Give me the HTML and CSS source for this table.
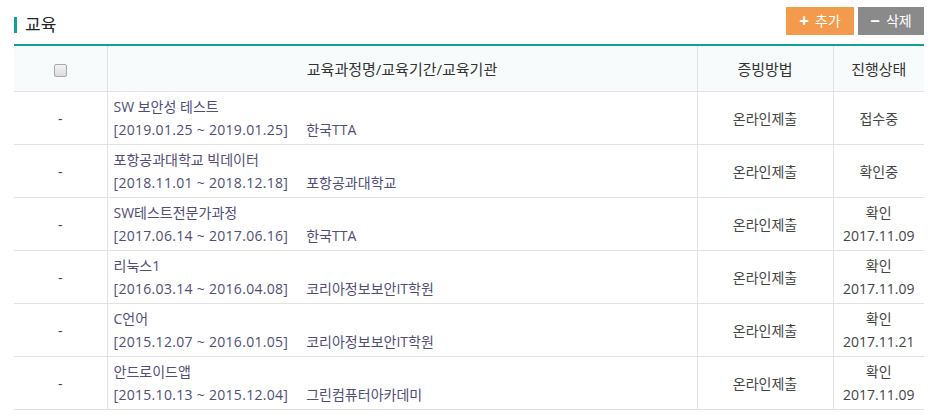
FILE: index.html
```html
<!DOCTYPE html>
<html lang="ko">
<head>
    <meta charset="UTF-8">
    <title>교육</title>
    <link rel="stylesheet" href="styles.css">
</head>
<body>
    <div class="section">
        <div class="section-head">
            <h3 class="section-title">교육</h3>
            <div class="btn-group">
                <button class="btn btn-add"><span class="btn-icon">+</span>추가</button>
                <button class="btn btn-del"><span class="btn-icon">&minus;</span>삭제</button>
            </div>
        </div>

        <table class="edu-table">
            <colgroup>
                <col class="col-check">
                <col class="col-name">
                <col class="col-proof">
                <col class="col-state">
            </colgroup>
            <thead>
                <tr>
                    <th><span class="chk"></span></th>
                    <th>교육과정명/교육기간/교육기관</th>
                    <th>증빙방법</th>
                    <th>진행상태</th>
                </tr>
            </thead>
            <tbody>
                <tr>
                    <td>-</td>
                    <td class="name">SW 보안성 테스트<br><span class="period">[2019.01.25 ~ 2019.01.25]</span><span class="org">한국TTA</span></td>
                    <td>온라인제출</td>
                    <td>접수중</td>
                </tr>
                <tr>
                    <td>-</td>
                    <td class="name">포항공과대학교 빅데이터<br><span class="period">[2018.11.01 ~ 2018.12.18]</span><span class="org">포항공과대학교</span></td>
                    <td>온라인제출</td>
                    <td>확인중</td>
                </tr>
                <tr>
                    <td>-</td>
                    <td class="name">SW테스트전문가과정<br><span class="period">[2017.06.14 ~ 2017.06.16]</span><span class="org">한국TTA</span></td>
                    <td>온라인제출</td>
                    <td>확인<br>2017.11.09</td>
                </tr>
                <tr>
                    <td>-</td>
                    <td class="name">리눅스1<br><span class="period">[2016.03.14 ~ 2016.04.08]</span><span class="org">코리아정보보안IT학원</span></td>
                    <td>온라인제출</td>
                    <td>확인<br>2017.11.09</td>
                </tr>
                <tr>
                    <td>-</td>
                    <td class="name">C언어<br><span class="period">[2015.12.07 ~ 2016.01.05]</span><span class="org">코리아정보보안IT학원</span></td>
                    <td>온라인제출</td>
                    <td>확인<br>2017.11.21</td>
                </tr>
                <tr>
                    <td>-</td>
                    <td class="name">안드로이드앱<br><span class="period">[2015.10.13 ~ 2015.12.04]</span><span class="org">그린컴퓨터아카데미</span></td>
                    <td>온라인제출</td>
                    <td>확인<br>2017.11.09</td>
                </tr>
            </tbody>
        </table>
    </div>
</body>
</html>
```

FILE: styles.css
```css
body {
    margin: 0;
    font-family: "Open Sans", "Noto Sans CJK KR", sans-serif;
    color: #333;
    background: #fff;
}
.section {
    width: 910px;
    padding: 7px 16px 0 14px;
}
.section-head {
    display: flex;
    justify-content: space-between;
    align-items: flex-start;
    height: 37px;
}
.section-title {
    margin: 10px 0 0;
    padding-left: 8px;
    border-left: 3px solid #13a09c;
    font-size: 17px;
    font-weight: normal;
    line-height: 16px;
    height: 16px;
    color: #222;
}
.btn-group {
    display: flex;
    gap: 4px;
}
.btn {
    height: 28px;
    border: 0;
    padding: 0;
    color: #fff;
    font-family: inherit;
    font-size: 14px;
    line-height: 28px;
    display: flex;
    align-items: center;
    justify-content: center;
}
.btn-icon {
    font-weight: bold;
    font-size: 17px;
    margin-right: 6px;
}
.btn-add {
    width: 68px;
    background: #f39a4c;
}
.btn-del {
    width: 66px;
    background: #8a8a8a;
}
.edu-table {
    width: 910px;
    border-collapse: collapse;
    table-layout: fixed;
    border-top: 2px solid #13a09c;
    border-bottom: 1px solid #b5b5b5;
    font-size: 14px;
}
.col-check { width: 93px; }
.col-proof { width: 136px; }
.col-state { width: 91px; }
th {
    height: 45px;
    background: #f8fbfb;
    font-weight: normal;
    font-size: 15px;
    color: #333;
    border-bottom: 1px solid #e2e2e2;
    border-left: 1px solid #e2e2e2;
    padding: 0;
}
td {
    height: 52px;
    padding: 0;
    text-align: center;
    line-height: 23px;
    color: #444;
    border-bottom: 1px solid #e2e2e2;
    border-left: 1px solid #e2e2e2;
}
th:first-child, td:first-child {
    border-left: 0;
}
td.name {
    text-align: left;
    padding-left: 6px;
    color: #4e4e78;
}
.period {
    letter-spacing: 0.3px;
}
.org {
    margin-left: 18px;
}
.chk {
    display: inline-block;
    width: 11px;
    height: 11px;
    border: 1px solid #a9a9a9;
    border-radius: 2px;
    background: linear-gradient(#f2f2f2, #dcdcdc);
    vertical-align: middle;
}
```
